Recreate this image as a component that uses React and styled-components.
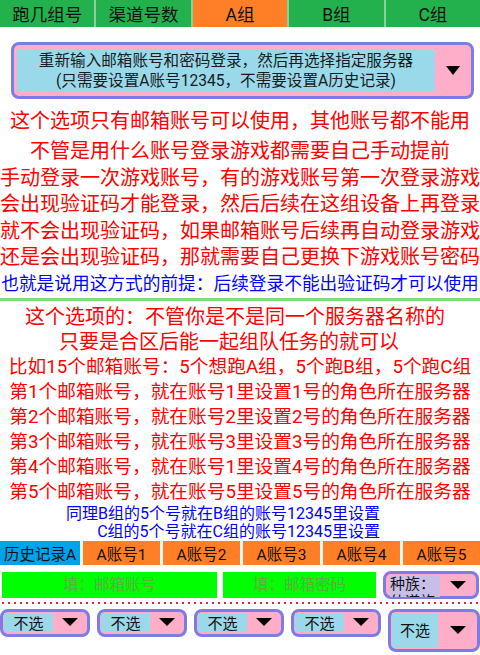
import React from 'react'
import styled, { createGlobalStyle } from 'styled-components'

const GlobalStyle = createGlobalStyle`
    html, body {
        margin: 0;
        padding: 0;
        background: #ffffff;
    }
    body {
        font-family: Roboto, "Noto Sans CJK SC", sans-serif;
        color: #111111;
    }
`

const Page = styled.div`
    width: 480px;
    height: 655px;
    overflow: hidden;
    display: flex;
    flex-direction: column;
`

const TabBar = styled.div`
    display: flex;
    height: 27px;
    flex-shrink: 0;
`

const Tab = styled.div`
    flex: 1;
    display: flex;
    align-items: center;
    justify-content: center;
    font-size: 17.5px;
    color: #111111;
    background: ${props => props.$active ? '#FF7F27' : '#22B14C'};

    & + & {
        border-left: 2px solid #8ccf9b;
    }
`

const Spinner = styled.div`
    display: flex;
    align-items: center;
    box-sizing: border-box;
    border: 3px solid #7C7CE4;
    border-radius: 8px;
    background: #FFAEC9;
`

const MainSpinner = styled(Spinner)`
    height: 57px;
    margin: 15px 6px 0 11px;
    padding: 5px 0 5px 3px;
`

const MainValue = styled.div`
    width: 418px;
    height: 100%;
    display: flex;
    flex-direction: column;
    justify-content: center;
    align-items: center;
    background: #99D9EA;
    font-size: 15.6px;
    line-height: 20px;
    color: #1a1a1a;
    white-space: nowrap;
`

const Caret = styled.div`
    flex: 1;
    display: flex;
    justify-content: center;
    align-items: center;

    &::after {
        content: '';
        width: 0;
        height: 0;
        border-left: ${props => props.$w / 2}px solid transparent;
        border-right: ${props => props.$w / 2}px solid transparent;
        border-top: ${props => props.$h}px solid #000000;
    }
`

const Notes = styled.div`
    margin-top: ${props => props.$top}px;
    display: flex;
    flex-direction: column;
    flex-shrink: 0;
`

const Line = styled.div`
    font-size: ${props => props.$size}px;
    line-height: ${props => props.$lh}px;
    height: ${props => props.$lh}px;
    color: ${props => props.$blue ? '#0000FF' : '#FF0000'};
    text-align: ${props => props.$align || 'center'};
    padding-right: ${props => props.$pr || 0}px;
    margin-bottom: ${props => props.$mb || 0}px;
    white-space: nowrap;
    overflow: visible;
`

const Divider = styled.div`
    height: 3px;
    background: #7ADC7A;
    flex-shrink: 0;
`

const SubTabs = styled.div`
    display: flex;
    height: 24px;
    flex-shrink: 0;
`

const SubTab = styled.div`
    width: 80px;
    box-sizing: border-box;
    display: flex;
    align-items: center;
    justify-content: center;
    font-size: 15.5px;
    color: #111111;
    background: ${props => props.$active ? '#00A2E8' : '#FF7F27'};

    & + & {
        border-left: 3px solid #f6f6f6;
    }
`

const FieldRow = styled.div`
    display: flex;
    align-items: center;
    margin-top: 6px;
    padding-left: 2px;
    height: 28px;
    flex-shrink: 0;
`

const Field = styled.input`
    width: ${props => props.$w}px;
    height: 26px;
    box-sizing: border-box;
    border: none;
    outline: none;
    padding: 0;
    margin-right: 6px;
    background: #00FF00;
    text-align: center;
    font-family: Roboto, "Noto Sans CJK SC", sans-serif;
    font-size: 15.5px;

    &::placeholder {
        color: #57B23C;
    }
`

const RaceSpinner = styled(Spinner)`
    width: 96px;
    height: 28px;
    margin-left: 1px;
    padding: 1px 0 0 4px;
    align-items: flex-start;
`

const RaceValue = styled.div`
    width: 50px;
    height: 22px;
    overflow: hidden;
    background: #C8BFE7;
    font-size: 15px;
    line-height: 18px;
    color: #111111;
`

const Dotted = styled.div`
    height: 2px;
    margin: 3px 0 0 2px;
    background: repeating-linear-gradient(90deg, #D42A2A 0 2px, transparent 2px 6px);
    flex-shrink: 0;
`

const PickRow = styled.div`
    display: flex;
    align-items: flex-start;
    gap: 7px;
    margin-top: 5px;
`

const Pick = styled(Spinner)`
    width: ${props => props.$w}px;
    height: ${props => props.$h}px;
    padding: 1px 0 2px 1px;
`

const PickValue = styled.div`
    width: ${props => props.$w}px;
    height: 100%;
    display: flex;
    align-items: center;
    justify-content: center;
    background: #99D9EA;
    font-size: 15px;
    color: #111111;
`

const topTabs = ['跑几组号', '渠道号数', 'A组', 'B组', 'C组']
const subTabs = ['历史记录A', 'A账号1', 'A账号2', 'A账号3', 'A账号4', 'A账号5']

const firstNotes = [
    '这个选项只有邮箱账号可以使用，其他账号都不能用',
    '不管是用什么账号登录游戏都需要自己手动提前',
    '手动登录一次游戏账号，有的游戏账号第一次登录游戏',
    '会出现验证码才能登录，然后后续在这组设备上再登录',
    '就不会出现验证码，如果邮箱账号后续再自动登录游戏',
    '还是会出现验证码，那就需要自己更换下游戏账号密码',
]

const accountNotes = [1, 2, 3, 4, 5].map(n =>
    `第${n}个邮箱账号，就在账号${n === 4 ? 1 : n}里设置${n}号的角色所在服务器`
)

function App() {
    return (
        <Page>
            <GlobalStyle />
            <TabBar>
                {topTabs.map(t => (
                    <Tab key={t} $active={t === 'A组'}>{t}</Tab>
                ))}
            </TabBar>

            <MainSpinner>
                <MainValue>
                    <span>重新输入邮箱账号和密码登录，然后再选择指定服务器</span>
                    <span>(只需要设置A账号12345，不需要设置A历史记录)</span>
                </MainValue>
                <Caret $w={15} $h={9} />
            </MainSpinner>

            <Notes $top={9}>
                {firstNotes.map((text, i) => (
                    <Line key={text} $size={20} $lh={i === 0 ? 27 : 26.5} $mb={i === 0 ? 3 : 0}>
                        {text}
                    </Line>
                ))}
                <Line $blue $size={17.7} $lh={27}>
                    也就是说用这方式的前提：后续登录不能出验证码才可以使用
                </Line>
            </Notes>

            <Divider />

            <Notes $top={4}>
                <Line $size={20} $lh={25} $pr={10}>这个选项的：不管你是不是同一个服务器名称的</Line>
                <Line $size={20} $lh={25} $pr={22}>只要是合区后能一起组队任务的就可以</Line>
                <Line $size={18.7} $lh={25}>比如15个邮箱账号：5个想跑A组，5个跑B组，5个跑C组</Line>
                {accountNotes.map(text => (
                    <Line key={text} $size={18.7} $lh={25}>{text}</Line>
                ))}
                <Line $blue $size={16} $lh={18} $align="right" $pr={100}>同理B组的5个号就在B组的账号12345里设置</Line>
                <Line $blue $size={16} $lh={18} $align="right" $pr={100}>C组的5个号就在C组的账号12345里设置</Line>
            </Notes>

            <SubTabs>
                {subTabs.map((t, i) => (
                    <SubTab key={t} $active={i === 0}>{t}</SubTab>
                ))}
            </SubTabs>

            <FieldRow>
                <Field $w={215} placeholder="填：邮箱账号" readOnly />
                <Field $w={153} placeholder="填：邮箱密码" readOnly />
                <RaceSpinner>
                    <RaceValue>种族：<br />仙道族</RaceValue>
                    <Caret $w={16} $h={8} style={{ alignSelf: 'center' }} />
                </RaceSpinner>
            </FieldRow>

            <Dotted />

            <PickRow>
                {[0, 1, 2, 3].map(i => (
                    <Pick key={i} $w={90} $h={28}>
                        <PickValue $w={49}>不选</PickValue>
                        <Caret $w={16} $h={8} />
                    </Pick>
                ))}
                <Pick $w={92} $h={43}>
                    <PickValue $w={46}>不选</PickValue>
                    <Caret $w={16} $h={8} />
                </Pick>
            </PickRow>
        </Page>
    )
}

export default App
